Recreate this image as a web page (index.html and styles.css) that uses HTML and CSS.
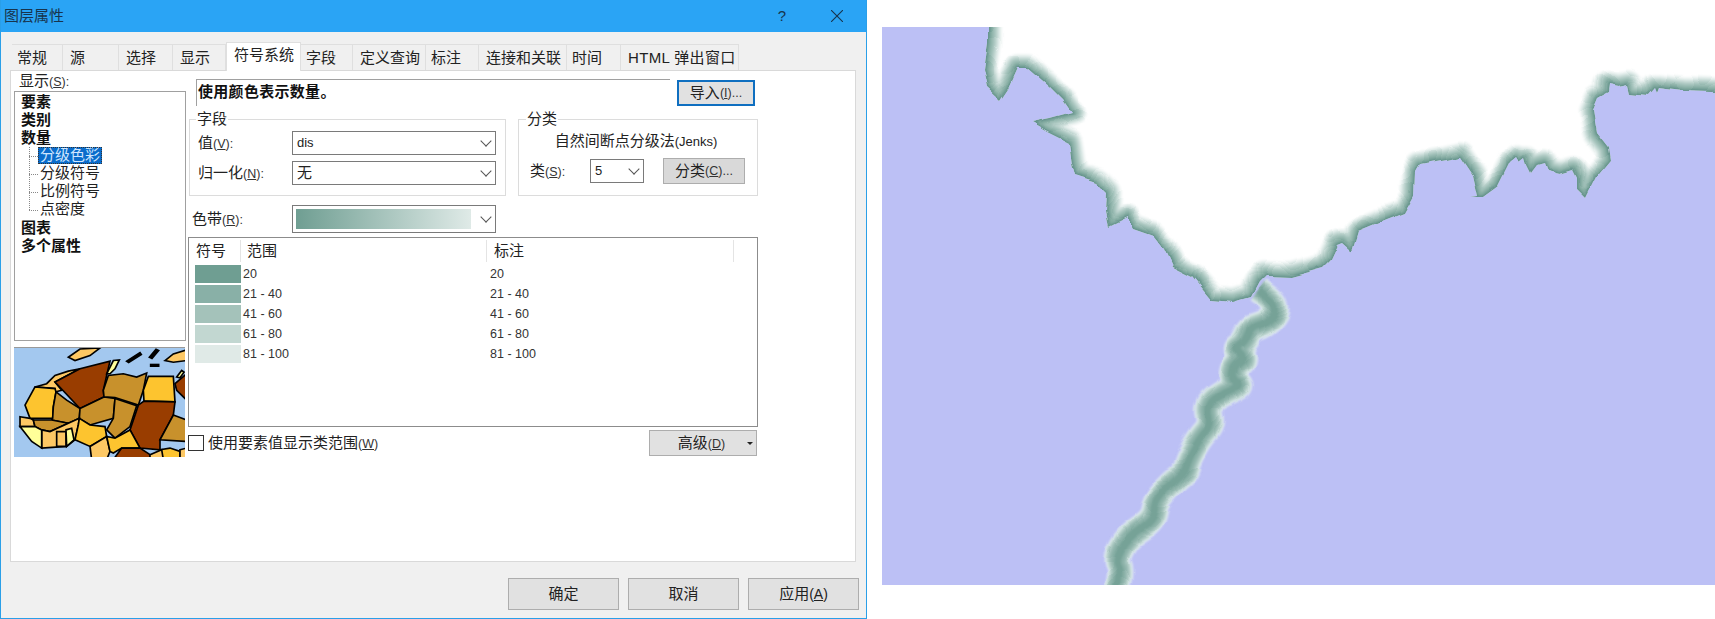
FILE: index.html
```html
<!DOCTYPE html>
<html lang="zh-CN">
<head>
<meta charset="utf-8">
<title>图层属性</title>
<link rel="stylesheet" href="styles.css">
</head>
<body>
<div class="dialog">
  <div class="titlebar">
    <span class="title">图层属性</span>
    <span class="help">?</span>
    <svg class="close" viewBox="0 0 12 12"><path d="M0 0L12 12M12 0L0 12"/></svg>
  </div>
  <div class="tabs">
    <div class="tab tab-tight">常规</div>
    <div class="tab">源</div>
    <div class="tab">选择</div>
    <div class="tab">显示</div>
    <div class="tab active">符号系统</div>
    <div class="tab tab-tight">字段</div>
    <div class="tab">定义查询</div>
    <div class="tab tab-tight">标注</div>
    <div class="tab">连接和关联</div>
    <div class="tab tab-tight">时间</div>
    <div class="tab wide">HTML 弹出窗口</div>
  </div>
  <div class="pane">
    <div class="left">
      <div class="show-label">显示<span class="k">(<u>S</u>):</span></div>
      <div class="tree">
        <div class="t-head">要素</div>
        <div class="t-head">类别</div>
        <div class="t-head">数量</div>
        <div class="t-sub"><span class="t-sel">分级色彩</span></div>
        <div class="t-sub"><span>分级符号</span></div>
        <div class="t-sub"><span>比例符号</span></div>
        <div class="t-sub t-last"><span>点密度</span></div>
        <div class="t-head">图表</div>
        <div class="t-head">多个属性</div>
      </div>
      <svg class="preview" viewBox="42 22 513 330" preserveAspectRatio="none">
        <rect class="sea" x="42" y="22" width="513" height="330"/>
        <g class="lands">
          <polygon class="c-light" points="205,50 240,25 300,22 270,45 225,60"/>
          <polygon class="c-light" points="495,60 520,40 560,28 560,60 520,65"/>
          <polygon class="c-light" points="105,140 140,130 165,105 205,92 240,85 165,125 185,150 165,155 165,145"/>
          <polygon class="c-gold" points="75,195 105,140 165,145 168,155 160,200 158,235 90,235"/>
          <polygon class="c-brown" points="165,125 240,85 330,62 320,105 310,150 312,170 240,205"/>
          <polygon class="c-pale" points="320,100 340,60 358,58 345,85 330,100"/>
          <polygon class="c-mid" points="168,155 200,180 240,205 238,235 205,250 155,240 158,235 160,200"/>
          <polygon class="c-mid" points="240,205 312,170 345,175 340,235 270,255 238,235"/>
          <polygon class="c-mid" points="345,175 410,197 390,260 345,295 320,270 340,235"/>
          <polygon class="c-mid" points="310,150 325,105 370,100 410,110 440,98 430,150 415,195 345,172 312,170"/>
          <polygon class="c-gold" points="430,150 445,108 520,108 525,185 432,183"/>
          <polygon class="c-brown" points="525,130 560,100 560,180 530,150"/>
          <polygon class="c-brown" points="415,195 432,183 525,185 520,225 480,300 480,330 420,325 390,270"/>
          <polygon class="c-mid" points="480,300 520,225 560,240 560,305"/>
          <polygon class="c-light" points="60,230 90,235 100,240 105,260 60,260"/>
          <polygon class="c-mid" points="100,240 155,240 205,250 150,275 125,270 105,260"/>
          <polygon class="c-light" points="125,270 150,275 205,250 238,235 235,255 225,300 200,320 125,325"/>
          <polygon class="c-pale" points="60,260 105,260 125,270 125,325 95,305"/>
          <polygon class="c-light" points="170,275 198,275 198,320 170,320"/>
          <polygon class="c-pale" points="198,270 215,265 222,300 200,320"/>
          <polygon class="c-gold" points="238,235 270,255 315,260 320,290 270,320 225,300 235,255"/>
          <polygon class="c-light" points="270,320 320,290 330,335 320,360 275,360"/>
          <polygon class="c-gold" points="320,290 345,295 390,270 420,325 365,325 340,340 330,335"/>
          <polygon class="c-brown" points="340,360 365,325 420,325 450,345 450,360"/>
          <polygon class="c-gold" points="480,330 510,325 540,335 540,360 490,360"/>
          <polygon class="c-light" points="540,330 560,325 560,360 540,360"/>
          <polygon class="c-light" points="450,345 485,330 490,360 450,360"/>
          <polygon class="c-ink" points="380,62 420,36 424,42 386,66"/>
          <polygon class="c-ink" points="448,50 468,26 476,30 456,54"/>
          <polygon class="c-ink" points="452,72 476,72 476,77 452,77"/>
          <polygon class="c-pale" points="530,110 545,90 552,95 540,112"/>
        </g>
      </svg>
    </div>
    <div class="right">
      <div class="top-row">
        <div class="desc">使用颜色表示数量。</div>
        <div class="btn btn-import">导入<span class="k">(<u>I</u>)...</span></div>
      </div>
      <div class="groups">
        <fieldset class="group group-field">
          <legend>字段</legend>
          <div class="field-row">
            <span class="f-label">值<span class="k">(<u>V</u>):</span></span>
            <div class="combo combo-l"><span class="k13">dis</span></div>
          </div>
          <div class="field-row">
            <span class="f-label">归一化<span class="k">(<u>N</u>):</span></span>
            <div class="combo combo-l">无</div>
          </div>
        </fieldset>
        <fieldset class="group group-class">
          <legend>分类</legend>
          <div class="method">自然间断点分级法<span class="k13">(Jenks)</span></div>
          <div class="class-row">
            <span class="c-label">类<span class="k">(<u>S</u>):</span></span>
            <div class="combo combo-s"><span class="k13">5</span></div>
            <div class="btn btn-classify">分类<span class="k">(<u>C</u>)...</span></div>
          </div>
        </fieldset>
      </div>
      <div class="ramp-row">
        <span class="r-label">色带<span class="k">(<u>R</u>):</span></span>
        <div class="combo combo-ramp"><div class="ramp"></div></div>
      </div>
      <div class="table">
        <div class="thead">
          <div class="th th-sym">符号</div>
          <div class="th th-range">范围</div>
          <div class="th th-label">标注</div>
        </div>
        <div class="tr"><div class="sw sw1"></div><span>20</span><span>20</span></div>
        <div class="tr"><div class="sw sw2"></div><span>21 - 40</span><span>21 - 40</span></div>
        <div class="tr"><div class="sw sw3"></div><span>41 - 60</span><span>41 - 60</span></div>
        <div class="tr"><div class="sw sw4"></div><span>61 - 80</span><span>61 - 80</span></div>
        <div class="tr"><div class="sw sw5"></div><span>81 - 100</span><span>81 - 100</span></div>
      </div>
      <div class="bottom-row">
        <div class="check"></div>
        <span class="check-label">使用要素值显示类范围<span class="k">(<u>W</u>)</span></span>
        <div class="btn btn-adv"><span class="adv-text">高级<span class="k">(<u>D</u>)</span></span><span class="arrow"></span></div>
      </div>
    </div>
  </div>
  <div class="footer">
    <div class="btn btn-foot">确定</div>
    <div class="btn btn-foot">取消</div>
    <div class="btn btn-foot">应用<span class="k14">(<u>A</u>)</span></div>
  </div>
</div>

<svg class="map" viewBox="882 27 833 558">
  <defs>
    <path id="coast" d="M987 0L987 43L983 70L987 88L1000 100L1008 88L1017 68L1028 68L1050 87L1063 100L1072 113L1050 119L1031 123L1047 132L1069 143L1072 163L1075 175L1097 182L1107 192L1106 213L1109 227L1127 218L1133 228L1153 235L1165 250L1173 267L1193 277L1212 300L1233 302L1250 297L1258 282L1265 275L1290 276L1323 267L1330 260L1337 245L1342 243L1352 252L1358 232L1387 220L1405 213L1415 195L1416 172L1420 165L1447 160L1460 157L1472 175L1477 197L1470 198L1483 198L1498 187L1510 163L1517 157L1520 162L1525 158L1527 165L1531 173L1537 165L1544 163L1547 171L1560 174L1573 170L1577 178L1577 190L1585 198L1595 178L1610 160L1608 147L1597 133L1593 110L1598 98L1607 93L1608 85L1618 87L1628 85L1630 93L1647 95L1653 88L1655 93L1657 88L1683 91L1740 93L1740 0Z"/>
    <path id="river" d="M1257 290Q1273 300 1275 306Q1277 312 1270 318.5Q1263 325 1256.5 326.5Q1250 328 1247.5 335Q1245 342 1240 345Q1235 348 1240 353Q1245 358 1239 362.5Q1233 367 1232.5 373.5Q1232 380 1237.5 382.5Q1243 385 1233 389Q1223 393 1215 399Q1207 405 1209.5 415Q1212 425 1206 431.5Q1200 438 1194 449Q1188 460 1186.5 466Q1185 472 1178.5 477.5Q1172 483 1163.5 492.5Q1155 502 1154 511Q1153 520 1140 528.5Q1127 537 1121 548.5Q1115 560 1118.5 565Q1122 570 1117 590"/>
    <clipPath id="land"><use href="#coast"/></clipPath>
    <filter id="soft" filterUnits="userSpaceOnUse" x="882" y="0" width="860" height="620"><feGaussianBlur stdDeviation="0.8"/></filter>
    <filter id="wiggle" filterUnits="userSpaceOnUse" x="882" y="0" width="860" height="620">
      <feTurbulence type="fractalNoise" baseFrequency="0.045" numOctaves="1" seed="4" result="n"/>
      <feDisplacementMap in="SourceGraphic" in2="n" scale="9" xChannelSelector="R" yChannelSelector="G"/>
    </filter>
  </defs>
  <rect class="water" x="882" y="27" width="833" height="558"/>
  <g filter="url(#wiggle)">
    <use href="#coast" class="land"/>
    <g clip-path="url(#land)">
      <g class="strokes" filter="url(#soft)">
        <use href="#coast" class="b1"/>
        <use href="#coast" class="b2"/>
        <use href="#coast" class="b3"/>
        <use href="#coast" class="b4"/>
        <use href="#coast" class="b5"/>
        <use href="#coast" class="b6"/>
      </g>
    </g>
    <g class="strokes" filter="url(#soft)">
      <use href="#river" class="r1"/>
      <use href="#river" class="r2"/>
      <use href="#river" class="r3"/>
      <use href="#river" class="r4"/>
      <use href="#river" class="r5"/>
    </g>
  </g>
</svg>
</body>
</html>
```
FILE: styles.css
```css
* { box-sizing: border-box; }
html, body { margin: 0; padding: 0; }
body {
  width: 1715px;
  height: 619px;
  overflow: hidden;
  display: flex;
  align-items: flex-start;
  background: #fff;
  font-family: "Liberation Sans", "Noto Sans CJK SC", sans-serif;
  font-size: 15px;
  line-height: 18px;
  color: #222;
}

.k { font-size: 12.5px; color: #333; }
.k13 { font-size: 13px; }
.k14 { font-size: 14px; }

/* dialog frame */
.dialog {
  width: 867px;
  height: 619px;
  display: flex;
  flex-direction: column;
  background: #f0f0f0;
  border: 1px solid #2a9fe8;
  border-top: 0;
  flex: none;
}
.titlebar {
  height: 32px;
  flex: none;
  display: flex;
  align-items: center;
  padding: 0 23px 0 3px;
  background: #2aa4f5;
  color: #17344d;
}
.title { font-size: 15px; }
.help { margin-left: auto; margin-right: 45px; font-size: 15px; }
.close { width: 12px; height: 12px; }
.close path { stroke: #17344d; stroke-width: 1.1; fill: none; }

/* tabs */
.tabs {
  display: grid;
  grid-template-columns: 51px 56px 54px 53px 75px 52px 73px 53px 88px 54px 118px;
  align-items: end;
  height: 38px;
  padding-left: 11px;
  flex: none;
}
.tab {
  height: 26px;
  padding: 4px 0 0 7px;
  background: #f0f0f0;
  border: 1px solid #dfdfdf;
  border-bottom: 0;
  border-left: 0;
  white-space: nowrap;
}
.tab-tight { padding-left: 5px; }
.tab.active {
  height: 29px;
  margin-bottom: -1px;
  background: #fff;
  border-left: 1px solid #dfdfdf;
  padding-top: 3px;
  position: relative;
  z-index: 1;
}
.tab.wide { letter-spacing: 0.35px; }

/* pane */
.pane {
  width: 846px;
  height: 492px;
  margin-left: 9px;
  flex: none;
  display: grid;
  grid-template-columns: 172px 570px;
  column-gap: 2px;
  padding-left: 3px;
  background: #fff;
  border: 1px solid #d9d9d9;
}
.left { display: flex; flex-direction: column; }
.show-label { height: 20px; padding-left: 5px; line-height: 19px; }
.tree {
  height: 250px;
  padding: 1px 0 0 6px;
  border: 1px solid #a0a0a0;
}
.t-head { height: 18px; font-weight: 700; color: #111; }
.t-sub {
  height: 18px;
  margin-left: 8px;
  padding-left: 9px;
  display: flex;
  background-image:
    repeating-linear-gradient(to bottom, #888 0 1px, transparent 1px 2px),
    repeating-linear-gradient(to right, #888 0 1px, transparent 1px 2px);
  background-size: 1px 100%, 10px 1px;
  background-position: 0 0, 0 9px;
  background-repeat: no-repeat;
}
.t-last { background-size: 1px 10px, 10px 1px; }
.t-sub span { padding: 0 2px; height: 17px; line-height: 16px; }
.t-sel { background: #0a6ccb; color: #cfe6ff; outline: 1px dotted #333; outline-offset: -1px; }
.preview {
  display: block;
  width: 171px;
  height: 110px;
  margin-top: 6px;
  border-top: 1px solid #999;
}
.sea { fill: #a3c8ef; }
.lands polygon { stroke: #000; stroke-width: 5; stroke-linejoin: miter; }
.c-brown { fill: #993d00; }
.c-mid { fill: #c8912c; }
.c-gold { fill: #fdc42f; }
.c-light { fill: #fdc864; }
.c-pale { fill: #ffff99; }
.c-ink { fill: #000; }

/* right column */
.right { display: flex; flex-direction: column; padding-top: 8px; }
.top-row { display: flex; height: 27px; flex: none; }
.desc {
  width: 474px;
  margin-left: 8px;
  padding: 3px 0 0 1px;
  border-top: 1px solid #a0a0a0;
  border-left: 1px solid #a0a0a0;
  font-weight: 700;
  letter-spacing: 0.3px;
  color: #111;
}
.btn {
  display: flex;
  align-items: center;
  justify-content: center;
  background: #e1e1e1;
  border: 1px solid #adadad;
  flex: none;
}
.btn-import {
  width: 78px;
  height: 26px;
  margin: 1px 0 0 7px;
  border: 2px solid #0f6fc0;
}
.groups { display: flex; gap: 12px; margin: 4px 0 0 1px; flex: none; }
.group {
  margin: 0;
  min-width: 0;
  height: 86px;
  border: 1px solid #dcdcdc;
}
.group legend { padding: 0 1px; line-height: 18px; height: 18px; }
.group-field { width: 317px; padding: 3px 0 0 8px; }
.group-field legend { margin-left: -2px; }
.group-class { width: 240px; padding: 3px 0 0 11px; }
.group-class legend { margin-left: -4px; }
.field-row { display: flex; align-items: center; margin-bottom: 6px; height: 24px; }
.f-label { width: 94px; flex: none; }
.combo {
  display: flex;
  align-items: center;
  height: 24px;
  padding-left: 4px;
  background: #fff;
  border: 1px solid #7a7a7a;
  flex: none;
}
.combo::after {
  content: "";
  width: 7px;
  height: 7px;
  margin: -4px 5px 0 auto;
  border-right: 1px solid #555;
  border-bottom: 1px solid #555;
  transform: rotate(45deg);
  flex: none;
}
.combo-l { width: 204px; }
.combo-s { width: 54px; }
.method { height: 20px; margin-left: -15px; text-align: center; line-height: 20px; }
.class-row { display: flex; align-items: center; height: 26px; margin-top: 7px; }
.c-label { width: 60px; flex: none; }
.btn-classify { width: 82px; height: 26px; margin-left: 19px; background: #d9d9d9; }
.ramp-row { display: flex; align-items: center; height: 28px; margin-top: 9px; padding-left: 4px; flex: none; }
.r-label { width: 100px; flex: none; }
.combo-ramp { width: 204px; height: 28px; padding-left: 3px; }
.ramp { width: 175px; height: 20px; background: linear-gradient(to right, #6f9e92, #dfeae7); flex: none; }

/* table */
.table {
  height: 190px;
  margin-top: 4px;
  border: 1px solid #8c8c8c;
  flex: none;
}
.thead {
  display: grid;
  grid-template-columns: 52px 246px 247px;
  height: 26px;
  padding: 2px 0;
}
.th { height: 22px; line-height: 22px; border-right: 1px solid #e4e4e4; }
.th-sym { padding-left: 7px; }
.th-range { padding-left: 6px; }
.th-label { padding-left: 7px; }
.tr {
  display: grid;
  grid-template-columns: 48px 247px 1fr;
  align-items: center;
  height: 20px;
  padding-left: 6px;
  font-size: 12.5px;
  color: #333;
}
.sw { width: 46px; height: 18px; }
.sw1 { background: #6f9e92; }
.sw2 { background: #89b0a7; }
.sw3 { background: #a4c2ba; }
.sw4 { background: #c2d7d1; }
.sw5 { background: #e0eae7; }

.bottom-row { display: flex; align-items: center; height: 26px; margin-top: 3px; flex: none; }
.check { width: 16px; height: 16px; background: #fff; border: 1px solid #333; flex: none; }
.check-label { margin-left: 4px; }
.btn-adv { width: 108px; height: 26px; margin-left: auto; margin-right: 1px; }
.adv-text { flex: 1; text-align: center; padding-left: 6px; }
.arrow {
  width: 0;
  height: 0;
  margin-right: 3px;
  border-left: 3px solid transparent;
  border-right: 3px solid transparent;
  border-top: 3px solid #222;
}

/* footer */
.footer {
  display: flex;
  justify-content: flex-end;
  gap: 9px;
  padding: 16px 7px 0 0;
  flex: none;
}
.btn-foot { width: 111px; height: 32px; }

/* map */
.map { display: block; width: 833px; height: 558px; margin: 27px 0 0 15px; flex: none; }
.water { fill: #bcc0f5; }
.land { fill: #fff; }
.strokes { fill: none; stroke-linejoin: round; stroke-linecap: butt; }
.b1 { stroke: #eef4f3; stroke-width: 28px; }
.b2 { stroke: #d8e6e3; stroke-width: 24px; }
.b3 { stroke: #bcd3ce; stroke-width: 20px; }
.b4 { stroke: #9fbfb7; stroke-width: 15px; }
.b5 { stroke: #84aca2; stroke-width: 9px; }
.b6 { stroke: #5f8f88; stroke-width: 3px; }
.r1 { stroke: #e6f1f1; stroke-width: 27px; }
.r2 { stroke: #c3dad5; stroke-width: 24px; }
.r3 { stroke: #a6c4bd; stroke-width: 20px; }
.r4 { stroke: #8cb2a9; stroke-width: 15px; }
.r5 { stroke: #76a297; stroke-width: 8px; }
```
